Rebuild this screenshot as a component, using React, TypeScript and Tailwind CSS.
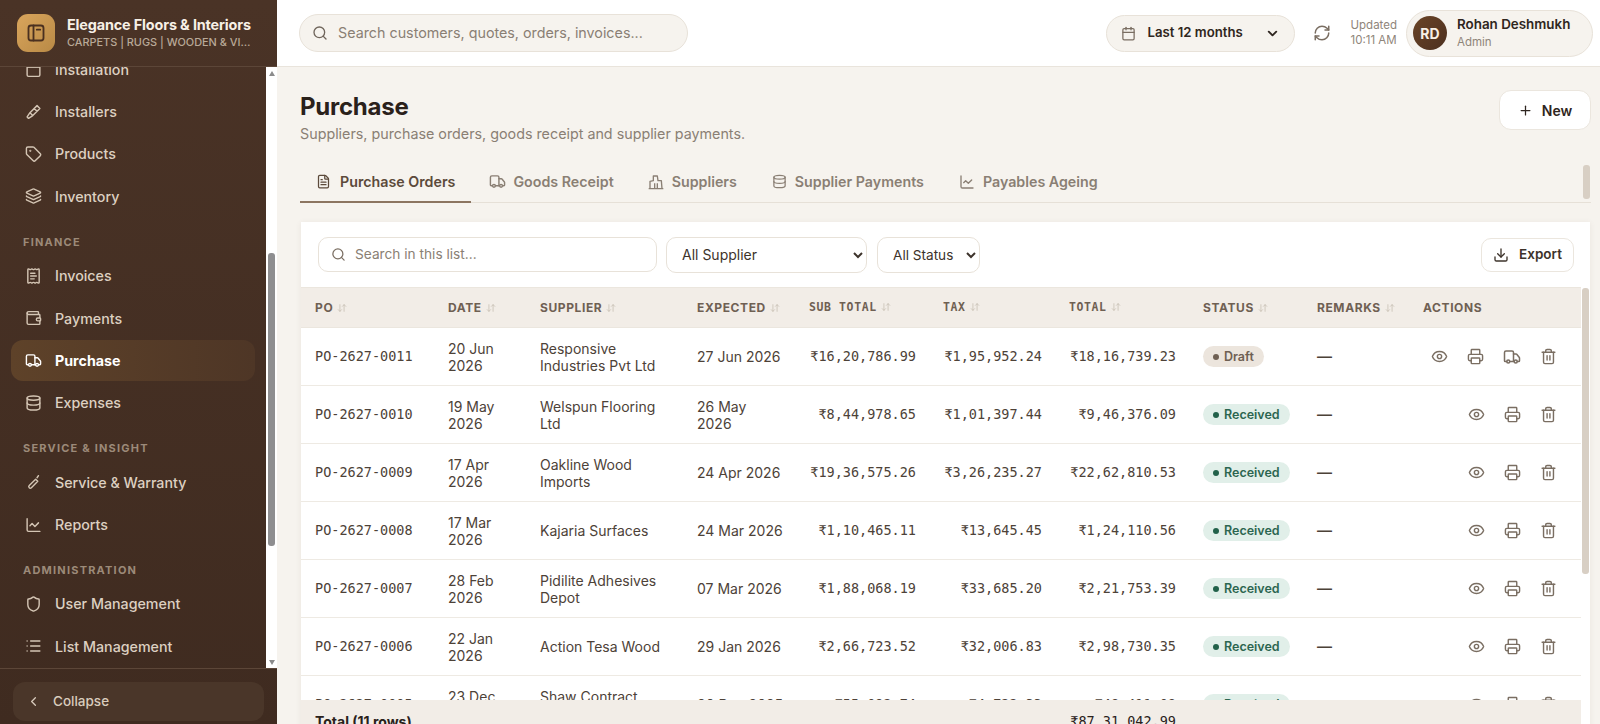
import {
  ArrowDownUp,
  Calendar,
  ChartLine,
  ChevronDown,
  ChevronLeft,
  Database,
  Download,
  Eye,
  FileText,
  Layers,
  List,
  Plus,
  Printer,
  ReceiptText,
  RefreshCw,
  Search,
  Shield,
  Tag,
  Trash2,
  Truck,
  Wallet,
} from "lucide-react";

const MONO = "font-['DejaVu_Sans_Mono',monospace]";

function LogoIcon() {
  return (
    <svg width="20" height="20" viewBox="0 0 24 24" fill="none" stroke="#4a3020" strokeWidth="2.2" strokeLinejoin="round">
      <rect x="3" y="3" width="18" height="18" rx="3" />
      <path d="M9 3v18M13 8h4" strokeLinecap="round" />
    </svg>
  );
}

function BoxIcon() {
  return (
    <svg width="18" height="18" viewBox="0 0 24 24" fill="none" stroke="currentColor" strokeWidth="2" strokeLinejoin="round">
      <rect x="3" y="3" width="18" height="18" rx="2" />
      <path d="M3 8h18" />
    </svg>
  );
}

function BrushIcon() {
  return (
    <svg width="18" height="18" viewBox="0 0 24 24" fill="none" stroke="currentColor" strokeWidth="2" strokeLinecap="round" strokeLinejoin="round">
      <path d="M17 3l4 4-10 10-4-4zM7 13l-4 6 2 2 6-4M13 7l4 4" />
    </svg>
  );
}

function WrenchIcon() {
  return (
    <svg width="18" height="18" viewBox="0 0 24 24" fill="none" stroke="currentColor" strokeWidth="2" strokeLinecap="round" strokeLinejoin="round">
      <path d="M15 8l3 3-9 9a2 2 0 0 1-3-3zM17 6l2-3" />
    </svg>
  );
}

function SuppliersIcon() {
  return (
    <svg width="16" height="16" viewBox="0 0 24 24" fill="none" stroke="currentColor" strokeWidth="2" strokeLinejoin="round">
      <path d="M3 22V11l5-1V3h6l1 7h5l1 12zM1 22h22M10 22v-8M14 22v-8" />
    </svg>
  );
}

function NavItem({ icon, label, active, cut }: { icon: React.ReactNode; label: string; active?: boolean; cut?: boolean }) {
  return (
    <div
      className={`flex h-[41px] shrink-0 items-center gap-[13px] rounded-xl pl-[14px] text-[14.25px] ${
        active
          ? "bg-gradient-to-r from-[#5e4229] to-[#4e3626] font-bold text-white"
          : "font-medium text-[#ddd0c1]"
      } ${cut ? "-mt-[18px]" : ""}`}
    >
      <span className={`flex w-[17px] justify-center ${active ? "text-white" : "text-[#d4c5b4]"}`}>{icon}</span>
      {label}
    </div>
  );
}

function NavHeading({ label }: { label: string }) {
  return (
    <div className="mt-[17px] mb-[5px] pl-[12px] text-[11px] font-bold tracking-[0.11em] text-[#9c8a79]">{label}</div>
  );
}

function NavGap() {
  return <div className="h-[1.3px] shrink-0" />;
}

function Sidebar() {
  return (
    <aside className="flex h-[724px] w-[277px] shrink-0 flex-col bg-gradient-to-b from-[#4a3326] to-[#3f2b20]">
      <div className="flex h-[67px] shrink-0 items-center gap-[12px] border-b border-[#5c4638] pl-[17px]">
        <div className="flex h-[38px] w-[38px] items-center justify-center rounded-[11px] bg-gradient-to-br from-[#d9a55c] to-[#b98a46]">
          <LogoIcon />
        </div>
        <div className="w-[186px]">
          <div className="text-[14.4px] leading-[19px] font-bold tracking-[-0.01em] whitespace-nowrap text-[#f7f0e6]">Elegance Floors & Interiors</div>
          <div className="truncate text-[10.9px] leading-[17px] font-medium text-[#b9a998]">CARPETS | RUGS | WOODEN & VINYL</div>
        </div>
      </div>
      <div className="flex min-h-0 flex-1">
        <nav className="flex min-w-0 flex-1 flex-col overflow-hidden px-[11px]">
          <NavItem cut icon={<BoxIcon />} label="Installation" />
          <NavGap />
          <NavItem icon={<BrushIcon />} label="Installers" />
          <NavGap />
          <NavItem icon={<Tag size={18} />} label="Products" />
          <NavGap />
          <NavItem icon={<Layers size={18} />} label="Inventory" />
          <NavHeading label="FINANCE" />
          <NavItem icon={<ReceiptText size={18} />} label="Invoices" />
          <NavGap />
          <NavItem icon={<Wallet size={18} />} label="Payments" />
          <NavGap />
          <NavItem active icon={<Truck size={19} />} label="Purchase" />
          <NavGap />
          <NavItem icon={<Database size={18} />} label="Expenses" />
          <NavHeading label="SERVICE & INSIGHT" />
          <NavItem icon={<WrenchIcon />} label="Service & Warranty" />
          <NavGap />
          <NavItem icon={<ChartLine size={18} />} label="Reports" />
          <NavHeading label="ADMINISTRATION" />
          <NavItem icon={<Shield size={18} />} label="User Management" />
          <NavGap />
          <NavItem icon={<List size={18} />} label="List Management" />
        </nav>
        <div className="flex w-[11px] shrink-0 flex-col items-center bg-white">
          <div className="mt-[4px] h-0 w-0 border-x-[3.5px] border-b-[5px] border-x-transparent border-b-[#8b8b8b]" />
          <div className="mt-[177px] h-[293px] w-[7px] rounded-[3px] bg-[#8e8e90]" />
          <div className="mt-auto mb-[3px] h-0 w-0 border-x-[3.5px] border-t-[5px] border-x-transparent border-t-[#8b8b8b]" />
        </div>
      </div>
      <div className="h-[56px] shrink-0 border-t border-[#5c4638] px-[13px] pt-[13px]">
        <div className="flex h-[39px] items-center gap-[12px] rounded-xl bg-[#4a3629] pl-[13px] text-[13.5px] font-medium text-[#d9ccbd]">
          <ChevronLeft size={15} />
          Collapse
        </div>
      </div>
    </aside>
  );
}

function TopBar() {
  return (
    <header className="flex h-[67px] shrink-0 items-center border-b border-[#e9e4dc] bg-white pr-[7px] pl-[22px]">
      <div className="flex h-[38px] w-[389px] items-center gap-[10px] rounded-full border border-[#e8e2d9] bg-[#f6f3ee] pl-[12px] text-[14.3px] text-[#8a7f74]">
        <Search size={16} className="text-[#6f655b]" />
        Search customers, quotes, orders, invoices...
      </div>
      <div className="ml-auto flex h-[37px] w-[189px] items-center rounded-full border border-[#e8e2d9] bg-[#f6f3ee] pl-[14px] text-[13.2px] font-semibold text-[#2f2620]">
        <Calendar size={15} className="text-[#7a6e62]" />
        <span className="ml-[12px]">Last 12 months</span>
        <ChevronDown size={15} strokeWidth={3} className="ml-[22px]" />
      </div>
      <RefreshCw size={18} className="ml-[18px] text-[#7a6e62]" />
      <div className="ml-[20px] text-[11.5px] leading-[15px] text-[#8f857a]">
        <div>Updated</div>
        <div>10:11 AM</div>
      </div>
      <div className="ml-[9px] flex h-[47px] w-[187px] items-center rounded-full border border-[#e8e2d9] bg-[#f6f3ee] pl-[6px]">
        <div className="flex h-[34px] w-[34px] items-center justify-center rounded-full bg-gradient-to-br from-[#6b4426] to-[#4c3020] text-[14px] font-bold text-[#f7f0e6]">RD</div>
        <div className="ml-[10px] -mt-[2px]">
          <div className="text-[13.4px] leading-[18px] font-semibold text-[#2f2620]">Rohan Deshmukh</div>
          <div className="mt-[2px] text-[11.5px] leading-[15px] text-[#8f857a]">Admin</div>
        </div>
      </div>
    </header>
  );
}

const tabs = [
  { label: "Purchase Orders", icon: <FileText size={15} />, box: "w-[15px]", active: true },
  { label: "Goods Receipt", icon: <Truck size={17} />, box: "w-[17px]" },
  { label: "Suppliers", icon: <SuppliersIcon />, box: "w-[17px]" },
  { label: "Supplier Payments", icon: <Database size={15} />, box: "w-[17px]" },
  { label: "Payables Ageing", icon: <ChartLine size={16} />, box: "w-[18px]" },
];

function Tabs() {
  return (
    <div className="mt-[19px] flex h-[39px] shrink-0 border-b border-[#e6e0d7]">
      {tabs.map((t) => (
        <div
          key={t.label}
          className={`flex h-[39px] items-center border-b-2 pr-[16px] pb-[2px] text-[14.25px] font-semibold ${
            t.active
              ? "gap-[9px] border-[#8c7561] pl-[16px] text-[#5c4a3b]"
              : "gap-[7px] border-transparent pl-[18px] text-[#8a7f74]"
          }`}
        >
          <span className={`flex justify-center ${t.box}`}>{t.icon}</span>
          {t.label}
        </div>
      ))}
    </div>
  );
}

type Row = {
  po: string;
  date: string;
  supplier: string;
  expected: string;
  sub: string;
  tax: string;
  total: string;
  draft?: boolean;
};

const rows: Row[] = [
  { po: "PO-2627-0011", date: "20 Jun 2026", supplier: "Responsive Industries Pvt Ltd", expected: "27 Jun 2026", sub: "₹16,20,786.99", tax: "₹1,95,952.24", total: "₹18,16,739.23", draft: true },
  { po: "PO-2627-0010", date: "19 May 2026", supplier: "Welspun Flooring Ltd", expected: "26 May 2026", sub: "₹8,44,978.65", tax: "₹1,01,397.44", total: "₹9,46,376.09" },
  { po: "PO-2627-0009", date: "17 Apr 2026", supplier: "Oakline Wood Imports", expected: "24 Apr 2026", sub: "₹19,36,575.26", tax: "₹3,26,235.27", total: "₹22,62,810.53" },
  { po: "PO-2627-0008", date: "17 Mar 2026", supplier: "Kajaria Surfaces", expected: "24 Mar 2026", sub: "₹1,10,465.11", tax: "₹13,645.45", total: "₹1,24,110.56" },
  { po: "PO-2627-0007", date: "28 Feb 2026", supplier: "Pidilite Adhesives Depot", expected: "07 Mar 2026", sub: "₹1,88,068.19", tax: "₹33,685.20", total: "₹2,21,753.39" },
  { po: "PO-2627-0006", date: "22 Jan 2026", supplier: "Action Tesa Wood", expected: "29 Jan 2026", sub: "₹2,66,723.52", tax: "₹32,006.83", total: "₹2,98,730.35" },
  { po: "PO-2627-0005", date: "23 Dec 2025", supplier: "Shaw Contract Flooring", expected: "30 Dec 2025", sub: "₹55,092.74", tax: "₹4,722.33", total: "₹48,411.08" },
];

const GRID = "grid grid-cols-[133px_92px_157px_112px_134px_126px_134px_114px_106px_1fr]";

function Sort() {
  return <ArrowDownUp size={10} className="ml-[4px] inline-block text-[#c9c0b5]" />;
}

function HeaderRow() {
  const cols = ["PO", "DATE", "SUPPLIER", "EXPECTED"];
  const mono = ["SUB TOTAL", "TAX", "TOTAL"];
  return (
    <div className={`${GRID} h-[41px] shrink-0 items-center border-y border-[#ebe6de] bg-[#f2ede7] text-[12px] font-bold tracking-[0.05em] whitespace-nowrap text-[#6f6053]`}>
      {cols.map((c) => (
        <div key={c} className="pl-[14px]">{c}<Sort /></div>
      ))}
      {mono.map((c) => (
        <div key={c} className={`pl-[14px] text-[11.5px] ${MONO}`}>{c}<Sort /></div>
      ))}
      <div className="pl-[14px]">STATUS<Sort /></div>
      <div className="pl-[14px]">REMARKS<Sort /></div>
      <div className="pl-[14px]">ACTIONS</div>
    </div>
  );
}

function TableRow({ row }: { row: Row }) {
  return (
    <div className={`${GRID} h-[58px] shrink-0 items-center border-b border-[#eeeae3] text-[14px] leading-[17px] text-[#4d4238]`}>
      <div className={`px-[14px] text-[13.5px] ${MONO}`}>{row.po}</div>
      <div className="px-[14px]">{row.date}</div>
      <div className="px-[14px]">{row.supplier}</div>
      <div className="pr-[11px] pl-[14px]">{row.expected}</div>
      <div className={`px-[13px] text-right text-[13.5px] ${MONO}`}>{row.sub}</div>
      <div className={`px-[13px] text-right text-[13.5px] ${MONO}`}>{row.tax}</div>
      <div className={`px-[13px] text-right text-[13.5px] ${MONO}`}>{row.total}</div>
      <div className="px-[14px]">
        {row.draft ? (
          <span className="inline-flex h-[21px] items-center gap-[5px] rounded-full bg-[#ece5dd] px-[10px] text-[12.5px] font-semibold text-[#6f6053]">
            <span className="h-[6px] w-[6px] rounded-full bg-[#6f6053]" />
            Draft
          </span>
        ) : (
          <span className="inline-flex h-[21px] items-center gap-[5px] rounded-full bg-[#e1efe9] px-[10px] text-[12.5px] font-semibold text-[#2c6650]">
            <span className="h-[6px] w-[6px] rounded-full bg-[#22614a]" />
            Received
          </span>
        )}
      </div>
      <div className="px-[14px] text-[15px] font-medium text-[#4d4238]">—</div>
      <div className="flex items-center justify-end gap-[19px] pr-[24px] text-[#7a6e62]">
        <Eye size={17} />
        <Printer size={17} />
        {row.draft && <Truck size={18} />}
        <Trash2 size={17} />
      </div>
    </div>
  );
}

export default function App() {
  return (
    <div className="flex h-[724px] w-[1600px] overflow-hidden bg-[#f6f3ee] font-['Inter',sans-serif]">
      <Sidebar />
      <main className="flex min-w-0 flex-1 flex-col">
        <TopBar />
        <div className="relative flex min-h-0 flex-1 flex-col overflow-hidden pr-[9px] pl-[23px]">
          <div className="flex shrink-0 items-start justify-between pt-[23px]">
            <div>
              <h1 className="text-[24px] leading-[33px] font-bold tracking-[-0.01em] text-[#2a211b]">Purchase</h1>
              <p className="text-[14.3px] leading-[22px] text-[#8a7f74]">Suppliers, purchase orders, goods receipt and supplier payments.</p>
            </div>
            <button className="flex h-[40px] w-[92px] items-center justify-center gap-[9px] rounded-xl border border-[#ebe6de] bg-white text-[14px] font-semibold text-[#2f2620]">
              <Plus size={15} />
              New
            </button>
          </div>
          <Tabs />
          <section className="mx-[1px] mt-[19px] flex shrink-0 flex-col bg-white shadow-[0_1px_6px_rgba(90,70,50,0.08)]">
            <div className="flex h-[65px] shrink-0 items-center pr-[16px] pl-[17px]">
              <div className="flex h-[35px] w-[339px] items-center gap-[9px] rounded-[10px] border border-[#e8e2d9] bg-white pl-[12px] text-[13.7px] text-[#8a7f74]">
                <Search size={15} className="text-[#7a6e62]" />
                Search in this list...
              </div>
              <select className="ml-[9px] h-[36px] w-[201px] rounded-[10px] border border-[#e8e2d9] bg-white pl-[11px] text-[14px] text-[#3d332b]">
                <option>All Supplier</option>
              </select>
              <select className="ml-[10px] h-[36px] w-[103px] rounded-[10px] border border-[#e8e2d9] bg-white pl-[11px] text-[13.6px] text-[#3d332b]">
                <option>All Status</option>
              </select>
              <button className="ml-auto flex h-[34px] w-[93px] items-center justify-center gap-[10px] rounded-[10px] border border-[#ebe6de] bg-white text-[13.5px] font-semibold text-[#3d332b]">
                <Download size={16} />
                Export
              </button>
            </div>
            <div className="flex">
              <div className="flex min-w-0 flex-1 flex-col">
                <HeaderRow />
                <div className="flex h-[372px] shrink-0 flex-col overflow-hidden">
                  {rows.map((r) => (
                    <TableRow key={r.po} row={r} />
                  ))}
                </div>
                <div className={`${GRID} h-[42px] shrink-0 items-center bg-[#f2ede7] text-[14px] font-bold text-[#2a211b]`}>
                  <div className="col-span-6 px-[14px]">Total (11 rows)</div>
                  <div className={`px-[13px] text-right text-[13.5px] font-normal ${MONO}`}>₹87,31,042.99</div>
                </div>
              </div>
              <div className="w-[9px] shrink-0 bg-white pt-[1px] pl-[1px]">
                <div className="h-[286px] w-[7px] rounded-[3px] bg-[#d8cfc4]" />
              </div>
            </div>
          </section>
          <div className="absolute top-[98px] right-[10px] h-[34px] w-[7px] rounded-[3px] bg-[#d8cfc4]" />
        </div>
      </main>
    </div>
  );
}
